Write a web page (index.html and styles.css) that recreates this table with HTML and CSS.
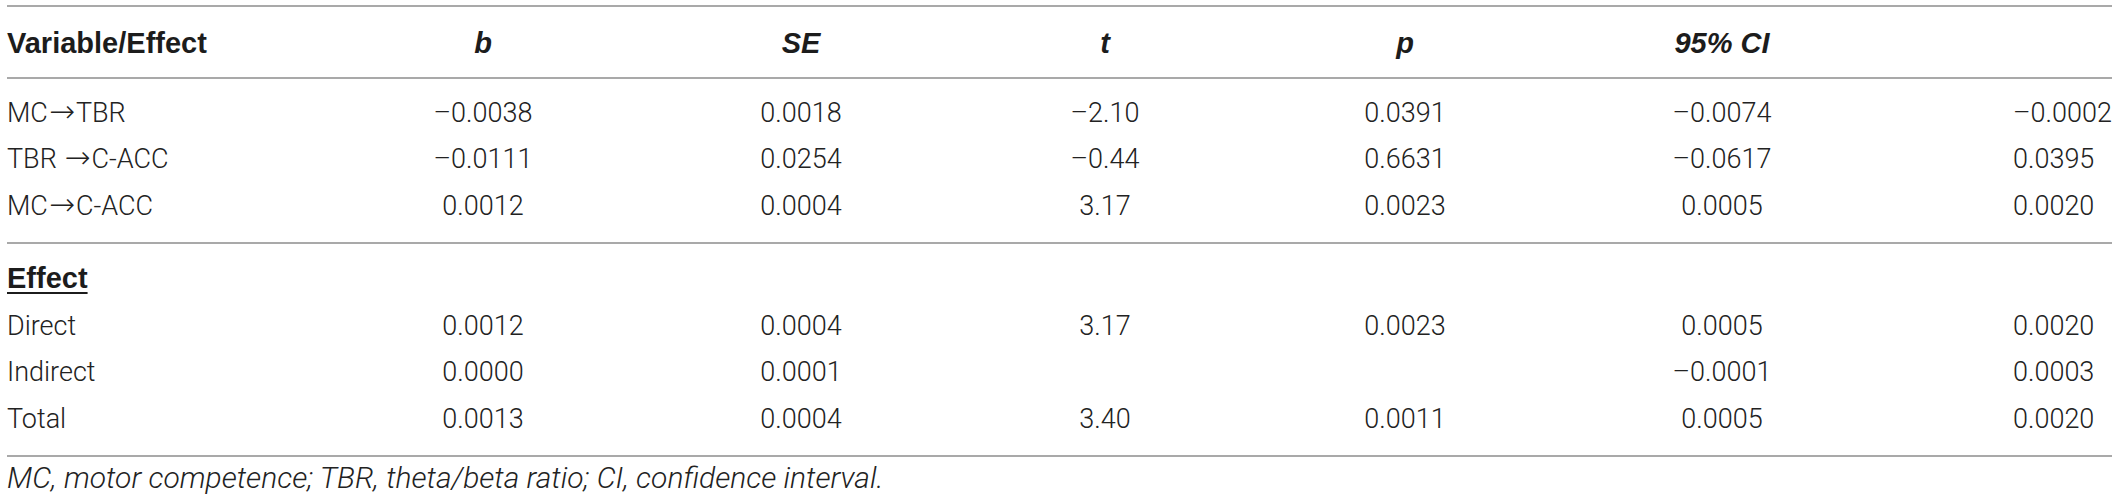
FILE: index.html
```html
<!DOCTYPE html>
<html lang="en">
<head>
<meta charset="utf-8">
<title>Mediation analysis</title>
<link rel="stylesheet" href="styles.css">
</head>
<body>
<div class="wrap">
  <table class="results">
    <colgroup>
      <col class="c-label">
      <col class="c-b">
      <col class="c-se">
      <col class="c-t">
      <col class="c-p">
      <col class="c-ci">
      <col class="c-last">
    </colgroup>
    <thead>
      <tr>
        <th class="label">Variable/Effect</th>
        <th><i>b</i></th>
        <th><i>SE</i></th>
        <th><i>t</i></th>
        <th><i>p</i></th>
        <th><i>95% CI</i></th>
        <th class="last"></th>
      </tr>
    </thead>
    <tbody class="paths">
      <tr>
        <td class="label">MC<span class="arr">→</span>TBR</td>
        <td>–0.0038</td>
        <td>0.0018</td>
        <td>–2.10</td>
        <td>0.0391</td>
        <td>–0.0074</td>
        <td class="last">–0.0002</td>
      </tr>
      <tr>
        <td class="label">TBR <span class="arr">→</span>C-ACC</td>
        <td>–0.0111</td>
        <td>0.0254</td>
        <td>–0.44</td>
        <td>0.6631</td>
        <td>–0.0617</td>
        <td class="last">0.0395</td>
      </tr>
      <tr>
        <td class="label">MC<span class="arr">→</span>C-ACC</td>
        <td>0.0012</td>
        <td>0.0004</td>
        <td>3.17</td>
        <td>0.0023</td>
        <td>0.0005</td>
        <td class="last">0.0020</td>
      </tr>
    </tbody>
    <tbody class="effects">
      <tr>
        <td class="label"><span class="section">Effect</span></td>
        <td></td><td></td><td></td><td></td><td></td><td class="last"></td>
      </tr>
      <tr>
        <td class="label">Direct</td>
        <td>0.0012</td>
        <td>0.0004</td>
        <td>3.17</td>
        <td>0.0023</td>
        <td>0.0005</td>
        <td class="last">0.0020</td>
      </tr>
      <tr>
        <td class="label">Indirect</td>
        <td>0.0000</td>
        <td>0.0001</td>
        <td></td>
        <td></td>
        <td>–0.0001</td>
        <td class="last">0.0003</td>
      </tr>
      <tr>
        <td class="label">Total</td>
        <td>0.0013</td>
        <td>0.0004</td>
        <td>3.40</td>
        <td>0.0011</td>
        <td>0.0005</td>
        <td class="last">0.0020</td>
      </tr>
    </tbody>
  </table>
  <p class="note">MC, motor competence; TBR, theta/beta ratio; CI, confidence interval.</p>
</div>
</body>
</html>
```

FILE: styles.css
```css
html, body {
  margin: 0;
  padding: 0;
  background: #ffffff;
}

body {
  font-family: Roboto, "Liberation Sans", Arial, sans-serif;
  color: #222222;
}

.wrap {
  padding: 5px 6px 0 7px;
}

.results {
  width: 2105px;
  border-collapse: collapse;
  table-layout: fixed;
  border-top: 2px solid #a9a9a9;
  border-bottom: 2px solid #a9a9a9;
}

.c-label { width: 317px; }
.c-b { width: 318px; }
.c-se { width: 318px; }
.c-t { width: 290px; }
.c-p { width: 310px; }
.c-ci { width: 324px; }
.c-last { width: 228px; }

.results th,
.results td {
  padding: 0;
  text-align: center;
  white-space: nowrap;
  line-height: 46.5px;
}

.results th {
  font-family: "Liberation Sans", Arial, sans-serif;
  font-weight: 700;
  font-size: 29px;
  color: #1c1c1c;
  padding-top: 13px;
  padding-bottom: 10px;
  border-bottom: 2px solid #a9a9a9;
}

.results th i {
  font-style: italic;
}

.results td {
  font-weight: 300;
  font-size: 27px;
}

.arr {
  font-family: "DejaVu Sans", sans-serif;
  font-weight: 200;
  font-size: 31px;
  line-height: 1;
  display: inline-block;
  width: 28px;
  text-align: center;
  vertical-align: 0;
}

.results .label {
  text-align: left;
}

.results .last {
  text-align: left;
  padding-left: 129px;
}

.results tbody tr:first-child td {
  padding-top: 11px;
}

.results tbody tr:last-child td {
  padding-bottom: 13px;
}

.results tbody.effects {
  border-top: 2px solid #a9a9a9;
}

.section {
  font-family: "Liberation Sans", Arial, sans-serif;
  font-weight: 700;
  font-size: 29px;
  color: #1c1c1c;
  text-decoration: underline;
  text-decoration-thickness: 2px;
  text-underline-offset: 4px;
}

.note {
  margin: 4px 0 0 0;
  font-size: 30px;
  font-weight: 300;
  font-style: italic;
  color: #222222;
  line-height: 34px;
}
```
